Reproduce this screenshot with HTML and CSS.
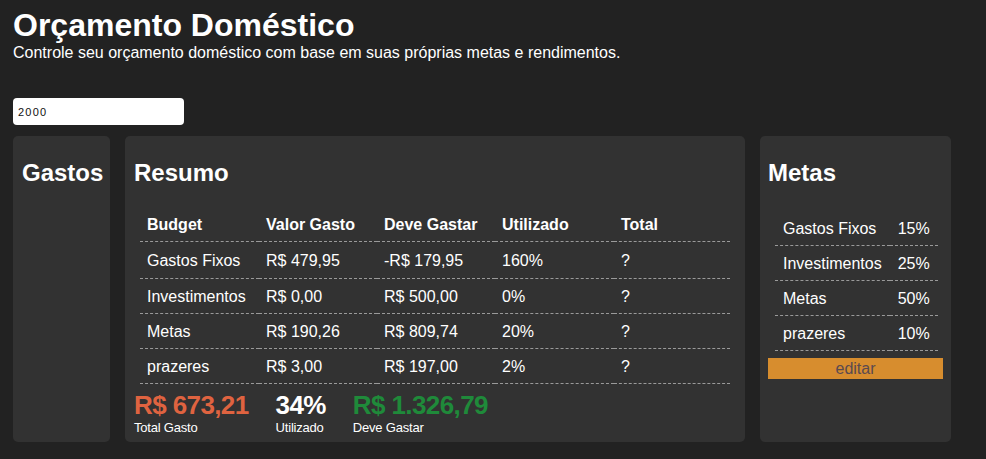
FILE: index.html
```html
<!DOCTYPE html>
<html lang="pt-BR">
<head>
<meta charset="utf-8">
<title>Orçamento Doméstico</title>
<link rel="stylesheet" href="styles.css">
</head>
<body>
<header class="top">
  <h1 class="title">Orçamento Doméstico</h1>
  <p class="subtitle">Controle seu orçamento doméstico com base em suas próprias metas e rendimentos.</p>
</header>
<input class="income" type="text" value="2000">
<main class="cards">
  <section class="card card-gastos">
    <h2 class="card-title">Gastos</h2>
  </section>
  <section class="card card-resumo">
    <h2 class="card-title">Resumo</h2>
    <table class="summary">
      <colgroup>
        <col class="c1"><col class="c2"><col class="c3"><col class="c4"><col class="c5">
      </colgroup>
      <thead>
        <tr><th>Budget</th><th>Valor Gasto</th><th>Deve Gastar</th><th>Utilizado</th><th>Total</th></tr>
      </thead>
      <tbody>
        <tr class="first"><td>Gastos Fixos</td><td>R$ 479,95</td><td>-R$ 179,95</td><td>160%</td><td>?</td></tr>
        <tr><td>Investimentos</td><td>R$ 0,00</td><td>R$ 500,00</td><td>0%</td><td>?</td></tr>
        <tr><td>Metas</td><td>R$ 190,26</td><td>R$ 809,74</td><td>20%</td><td>?</td></tr>
        <tr><td>prazeres</td><td>R$ 3,00</td><td>R$ 197,00</td><td>2%</td><td>?</td></tr>
      </tbody>
    </table>
    <div class="totals">
      <div class="total">
        <div class="total-value spent">R$ 673,21</div>
        <div class="total-label">Total Gasto</div>
      </div>
      <div class="total">
        <div class="total-value used">34%</div>
        <div class="total-label">Utilizado</div>
      </div>
      <div class="total">
        <div class="total-value left">R$ 1.326,79</div>
        <div class="total-label">Deve Gastar</div>
      </div>
    </div>
  </section>
  <section class="card card-metas">
    <h2 class="card-title">Metas</h2>
    <table class="goals">
      <tbody>
        <tr><td>Gastos Fixos</td><td>15%</td></tr>
        <tr><td>Investimentos</td><td>25%</td></tr>
        <tr><td>Metas</td><td>50%</td></tr>
        <tr><td>prazeres</td><td>10%</td></tr>
      </tbody>
    </table>
    <button class="edit" type="button">editar</button>
  </section>
</main>
</body>
</html>
```

FILE: styles.css
```css
* { box-sizing: border-box; }

html, body {
  margin: 0;
  background: #222222;
}

body {
  padding: 0 13px;
  color: #ffffff;
  font-family: "Liberation Sans", Arial, sans-serif;
  font-size: 16px;
}

.title {
  margin: 7px 0 0;
  font-size: 32px;
  line-height: 37px;
  font-weight: bold;
}

.subtitle {
  margin: 0;
  font-size: 16px;
  line-height: 18px;
}

.income {
  display: block;
  margin-top: 36px;
  width: 171px;
  height: 27px;
  padding: 0 5px;
  border: none;
  border-radius: 4px;
  background: #ffffff;
  color: #111111;
  font-family: "Liberation Sans", Arial, sans-serif;
  font-size: 11px;
  letter-spacing: 1.2px;
  outline: none;
}

.cards {
  display: flex;
  gap: 15px;
  margin-top: 11px;
  height: 306px;
}

.card {
  background: #323232;
  border-radius: 5px;
  padding: 8px;
}

.card-gastos { width: 97px; }
.card-resumo { width: 620px; }
.card-metas { width: 191px; }

.card-title {
  margin: 15px 0 0 1px;
  font-size: 24px;
  line-height: 28px;
  font-weight: bold;
}

.card-metas .card-title { margin-left: 0; }

.summary {
  width: 590px;
  margin: 20px 0 0 7px;
  border-collapse: collapse;
  table-layout: fixed;
}

.summary .c1 { width: 119px; }
.summary .c2 { width: 118px; }
.summary .c3 { width: 118px; }
.summary .c4 { width: 119px; }
.summary .c5 { width: 116px; }

.summary th,
.summary td {
  padding: 9px 7px 7px;
  line-height: 18px;
  text-align: left;
  white-space: nowrap;
  border-bottom: 1px dashed #9a9a9a;
}

.summary th { font-weight: bold; }

.summary tr.first td {
  padding-top: 10px;
  padding-bottom: 8px;
}

.totals {
  display: flex;
  gap: 27px;
  margin: 6px 0 0 1px;
}

.total-value {
  font-size: 26px;
  line-height: 30px;
  font-weight: bold;
  letter-spacing: -0.6px;
}

.spent { color: #df6340; }
.used { color: #ffffff; }
.left { color: #1f8a3a; }

.total-label {
  font-size: 13px;
  line-height: 15px;
  letter-spacing: -0.2px;
}

.goals {
  margin: 24px 0 0 7px;
  border-collapse: collapse;
}

.goals td {
  padding: 9px 8px 7px;
  line-height: 18px;
  white-space: nowrap;
  border-bottom: 1px dashed #9a9a9a;
}

.edit {
  display: block;
  width: 100%;
  height: 21px;
  margin-top: 7px;
  padding: 0;
  border: none;
  background: #d78d2e;
  color: #5a4a50;
  font-family: "Liberation Sans", Arial, sans-serif;
  font-size: 16px;
  line-height: 21px;
  text-align: center;
}
```
